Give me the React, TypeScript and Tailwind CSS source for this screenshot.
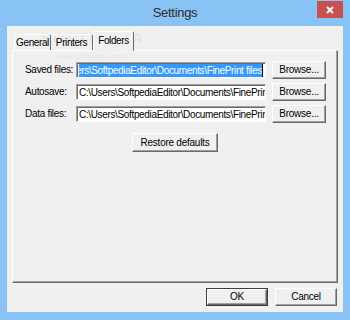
import React from 'react';

const font = { fontFamily: '"Liberation Sans", Arial, sans-serif' };

function Btn({ label, w, isDefault }: { label: string; w: string; isDefault?: boolean }) {
  return (
    <div className={`${w} h-[18px] ${isDefault ? 'border border-[#3c3c3c]' : ''}`}>
      <div className="h-full w-full flex items-center justify-center bg-[#f0f0f0] border border-t-white border-l-white border-r-[#696969] border-b-[#696969] shadow-[inset_-1px_-1px_0_#a0a0a0] text-[10px] tracking-[-0.25px] text-black leading-none">
        {label}
      </div>
    </div>
  );
}

function PathRow({ label, value, selected }: { label: string; value: string; selected?: boolean }) {
  return (
    <div className="flex items-center h-[18px]">
      <div className="w-[50px] mr-px text-[10px] tracking-[-0.3px] text-black leading-none whitespace-nowrap">{label}</div>
      <div className="w-[190px] h-[16px] bg-white border border-t-[#a0a0a0] border-l-[#a0a0a0] border-r-white border-b-white shadow-[inset_1px_1px_0_#696969] flex items-center overflow-hidden pl-[2px] pr-[2px]">
        {selected ? (
          <div className="flex-1 flex justify-end items-center overflow-hidden">
            <span className="bg-[#3399ff] text-white text-[10px] tracking-[-0.35px] leading-[13px] whitespace-nowrap">{value}</span>
            <span className="w-px h-[13px] bg-black shrink-0" />
          </div>
        ) : (
          <span className="text-black text-[10px] tracking-[-0.35px] leading-[13px] whitespace-nowrap">{value}</span>
        )}
      </div>
      <div className="ml-[6px]">
        <Btn label="Browse..." w="w-[54px]" />
      </div>
    </div>
  );
}

export default function App() {
  return (
    <div className="w-[350px] h-[320px] bg-[#89c2f5] flex flex-col" style={font}>
      {/* title bar */}
      <div className="h-[26px] relative flex items-center justify-center">
        <span className="text-[13px] tracking-[-0.3px] text-[#2e2e2e] -mt-[1px]">Settings</span>
        <div className="absolute top-[1px] right-[7px] w-[26px] h-[17px] bg-[#c75050] flex items-center justify-center">
          <svg width="8" height="8" viewBox="0 0 8 8">
            <path d="M1 1 L7 7 M7 1 L1 7" stroke="white" strokeWidth="1.8" />
          </svg>
        </div>
      </div>

      {/* client area */}
      <div className="flex-1 mx-[7px] mb-[8px] bg-[#f0f0f0] flex flex-col px-[5px] pt-[5px] relative">
        {/* watermark */}
        <div className="absolute left-[34px] top-[1px] text-[15px] tracking-[2px] text-[#e6e6e6] font-bold pointer-events-none">SOFTPEDIA</div>
        <div className="absolute left-[50px] top-[25px] text-[8px] text-[#e4e4e4] pointer-events-none">www.softpedia.com</div>

        {/* tabs */}
        <div className="flex items-end pl-[2px] h-[19px] relative">
          <div className="w-[37px] h-[16px] border-l border-t border-r border-l-white border-t-white border-r-[#696969] rounded-t-[2px] flex items-center justify-center text-[10px] tracking-[-0.4px] text-black leading-none">
            General
          </div>
          <div className="w-[42px] h-[16px] border-t border-r border-t-white border-r-[#696969] rounded-t-[2px] flex items-center justify-center text-[10px] tracking-[-0.4px] text-black leading-none">
            Printers
          </div>
          <div className="w-[41px] h-[20px] -mb-px relative z-10 bg-[#f0f0f0] border-l border-t border-r border-l-white border-t-white border-r-[#696969] rounded-t-[2px] flex items-center justify-center text-[10px] tracking-[-0.4px] text-black leading-none pb-[2px]">
            Folders
          </div>
        </div>

        {/* panel */}
        <div className="flex-1 border border-t-white border-l-white border-r-[#696969] border-b-[#696969] shadow-[inset_-1px_-1px_0_#a0a0a0] pl-[12px] pt-[10px] flex flex-col">
          <div className="flex flex-col gap-[4px]">
            <PathRow label="Saved files:" value="C:\Users\SoftpediaEditor\Documents\FinePrint files" selected />
            <PathRow label="Autosave:" value="C:\Users\SoftpediaEditor\Documents\FinePrint files" />
            <PathRow label="Data files:" value="C:\Users\SoftpediaEditor\Documents\FinePrint files" />
          </div>
          <div className="flex justify-center mt-[10px] pr-[12px]">
            <div className="w-[86px] h-[19px] flex items-center justify-center bg-[#f0f0f0] border border-t-white border-l-white border-r-[#696969] border-b-[#696969] shadow-[inset_-1px_-1px_0_#a0a0a0] text-[10px] tracking-[-0.25px] text-black leading-none">
              Restore defaults
            </div>
          </div>
        </div>

        {/* footer buttons */}
        <div className="flex justify-end gap-[7px] mt-[5px] mb-[6px] pr-[1px]">
          <Btn label="OK" w="w-[62px]" isDefault />
          <Btn label="Cancel" w="w-[62px]" />
        </div>
      </div>
    </div>
  );
}
